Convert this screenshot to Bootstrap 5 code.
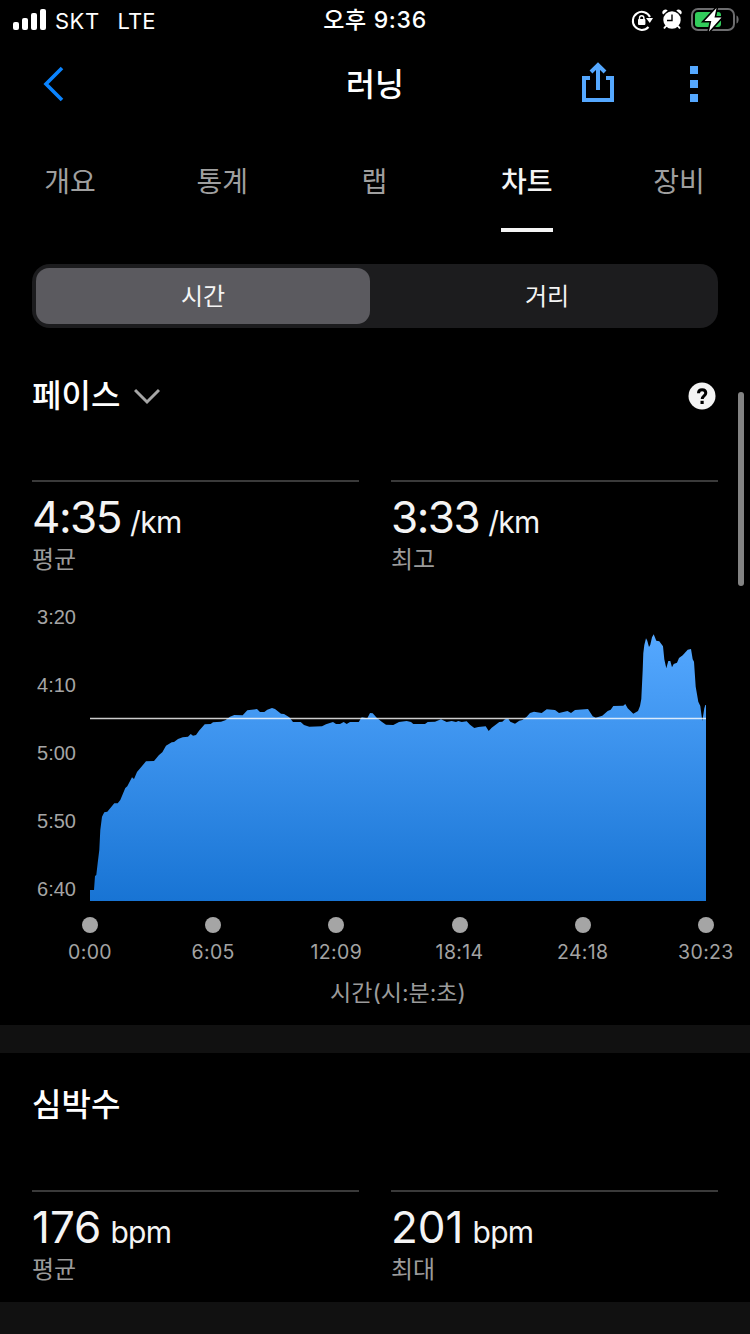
<!DOCTYPE html>
<html lang="ko" data-bs-theme="dark">
<head>
<meta charset="utf-8">
<meta name="viewport" content="width=device-width, initial-scale=1">
<title>러닝</title>
<link href="https://cdn.jsdelivr.net/npm/bootstrap@5.3.0/dist/css/bootstrap.min.css" rel="stylesheet">
<style>
body{background:#000;color:#f4f4f4;font-family:Inter,"Noto Sans CJK KR",sans-serif;line-height:1;height:1334px;overflow:hidden}
svg{display:block;flex:none}
.three{display:grid;grid-template-columns:1fr auto 1fr;align-items:center}
.status{height:40px;padding:0 10px 0 13px;font-size:22px;color:#fff}
.carrier{letter-spacing:.5px}
.carrier,.net{padding-top:1px}
.net{margin-left:18px}
.status .clock{font-size:23px;font-weight:500;letter-spacing:.7px;padding-top:1px;margin-left:-3px}
.titlebar{height:88px;padding:0 40px}
.titlebar h1{font-size:31.5px;font-weight:500;margin:0;padding-top:2px}
.tabs{height:104px;padding:0 27px 0 26px;font-size:28px}
.tabs .nav-item{width:88px;display:flex;justify-content:center}
.tabs .nav-link{padding:2px 0 0;color:#9f9f9f;height:104px;line-height:104px;border-bottom:4px solid transparent}
.tabs .nav-link.active{color:#f4f4f4;font-weight:500;border-color:#f4f4f4}
.segment{margin:32px 32px 0;height:64px;padding:4px;border-radius:18px;background:#1c1c1e}
.segment .btn{flex:1 1 0;border:0;border-radius:13px;font-size:24px;line-height:1;color:#f4f4f4;padding:8px 0 6px 10px}
.segment .btn.on{background:#5b5a5f;flex:0 0 334px;padding-left:0}
.head{height:136px;padding:0 34px 0 32px}
.head h2{font-size:32px;font-weight:500;margin:0}
.pace-head{height:152px;padding-bottom:16px}
.heart-head{height:137px;padding-bottom:31px}
.chevron{margin-left:14px}
.stats{padding:0 32px;gap:32px;height:110px}
.heart .stats{height:112px}
.stat{flex:1 1 0;border-top:2px solid #3a3a3a}
.value{font-size:44px;line-height:70px;height:63px;white-space:nowrap}
.value small{font-size:30px;margin-left:9px;letter-spacing:-.7px}
.time{letter-spacing:-1.5px}
.caption{font-size:24px;line-height:30px;color:#9b9b9b}
.plot{height:315px}
.ylabels{width:90px;padding:17px 14px 0 0;font:20px/20px "Liberation Sans",sans-serif;color:#a5a5a5;text-align:right}
.ylabels div{height:68px}
.xlabels{padding:12px 2px 0 48px;font-size:19.5px;letter-spacing:.35px;color:#a3a3a3}
.xlabels>div{width:84px}
.dot{width:16px;height:16px;border-radius:50%;background:#a5a5a5;margin-bottom:10px}
.axis{font-size:23px;line-height:28px;color:#9b9b9b;padding:16px 0 18px 46px}
.band{height:28px;background:#111}
.band.last{height:32px}
.scroll{position:absolute;left:738px;top:392px;width:6px;height:194px;border-radius:3px;background:#838383}
</style>
</head>
<body class="position-relative">
<header class="status three">
  <div class="d-flex align-items-center">
    <svg width="34" height="22" viewBox="0 0 34 22" fill="#fff"><rect y="13" width="6" height="8" rx="2"/><rect x="9" y="9" width="6" height="12" rx="2"/><rect x="18" y="4" width="6" height="17" rx="2"/><rect x="27" width="6" height="21" rx="2"/></svg>
    <span class="carrier ms-2">SKT</span><span class="net">LTE</span>
  </div>
  <div class="clock">오후 9:36</div>
  <div class="d-flex justify-content-end">
    <svg width="110" height="40" viewBox="630 0 110 40">
      <path d="M648.500 27A9 9 0 1 1 650 17" fill="none" stroke="#fff" stroke-width="2"/><path d="M646 18h7l-3.200 5z" fill="#fff"/>
      <rect x="638" y="19" width="7.400" height="6" rx="1" fill="#fff"/><path d="M639.500 20v-2a2.200 2.200 0 0 1 4.400 0v2" fill="none" stroke="#fff" stroke-width="1.400"/>
      <circle cx="672" cy="20" r="8.700" fill="#fff"/><path d="M663.200 14.600a3 3 0 0 1 4.500-4z M680.800 14.600a3 3 0 0 0-4.500-4z" fill="#fff"/><path d="M666 26l-2 2.500M678 26l2 2.500" stroke="#fff" stroke-width="2"/><path d="M672 14.500v6h-5" fill="none" stroke="#000" stroke-width="1.400"/>
      <rect x="692" y="9" width="42" height="21" rx="6" fill="none" stroke="#6d6d6f" stroke-width="2"/><path d="M736.500 15.500c2.800 1 2.800 7 0 8z" fill="#6d6d6f"/>
      <rect x="695" y="12" width="26" height="15" rx="3" fill="#32cc5b"/>
      <path d="M716.500 8L704.500 21h6.800l-2.300 10.500L721.500 17.500h-7z" fill="#fff" stroke="#000" stroke-width="3.200" paint-order="stroke"/>
    </svg>
  </div>
</header>

<nav class="titlebar three">
  <svg width="26" height="40" viewBox="40 64 26 40"><path d="M62 68L46 84L62 100" fill="none" stroke="#0b84ff" stroke-width="3.600"/></svg>
  <h1>러닝</h1>
  <div class="d-flex justify-content-end">
    <svg width="130" height="44" viewBox="580 62 130 44"><path d="M590 78h-6v22h28v-22h-6M598 90V66M591 72l7-7 7 7" fill="none" stroke="#55a8ff" stroke-width="4"/><path d="M690 66h8v8h-8zM690 80h8v8h-8zM690 94h8v8h-8z" fill="#55a8ff"/></svg>
  </div>
</nav>

<ul class="nav tabs justify-content-between flex-nowrap">
  <li class="nav-item"><a class="nav-link">개요</a></li>
  <li class="nav-item"><a class="nav-link">통계</a></li>
  <li class="nav-item"><a class="nav-link">랩</a></li>
  <li class="nav-item"><a class="nav-link active">차트</a></li>
  <li class="nav-item"><a class="nav-link">장비</a></li>
</ul>

<div class="segment d-flex">
  <button class="btn on">시간</button>
  <button class="btn">거리</button>
</div>

<section>
  <div class="head pace-head d-flex align-items-center">
    <h2>페이스</h2>
    <svg class="chevron" width="26" height="18" viewBox="0 0 26 18"><path d="M1 3L13 15L25 3" fill="none" stroke="#a6a6a6" stroke-width="3"/></svg>
    <svg class="ms-auto" width="28" height="28" viewBox="0 0 28 28"><circle cx="14" cy="14" r="13.500" fill="#f4f4f4"/><path d="M10.500 11.300c0-2.300 1.400-3.500 3.600-3.500s3.700 1.200 3.700 3.200c0 2.800-3.600 2.900-3.600 6" fill="none" stroke="#000" stroke-width="3"/><path d="M12.500 18.800h3.200v3.200h-3.200z"/></svg>
  </div>
  <div class="stats d-flex">
    <div class="stat"><div class="value"><span class="time">4:35</span><small>/km</small></div><div class="caption">평균</div></div>
    <div class="stat"><div class="value"><span class="time">3:33</span><small>/km</small></div><div class="caption">최고</div></div>
  </div>
  <div class="d-flex plot">
    <div class="ylabels"><div>3:20</div><div>4:10</div><div>5:00</div><div>5:50</div><div>6:40</div></div>
    <svg width="616" height="311" viewBox="90 590 616 311">
      <defs><linearGradient id="pace" x1="0" y1="0" x2="0" y2="1"><stop stop-color="#55a8ff"/><stop offset="1" stop-color="#1874d4"/></linearGradient></defs>
      <path fill="url(#pace)" d="M90 901V890H94L95 876L96.300 875L97.700 863L99.300 850L100.300 830L102 816.700L104.300 812.300L107.300 811.700L114.300 803.300H117.700L120.300 800L125.300 788L127.300 786.300L132 777.300L134 779L137 772L146 761.300L154 761L159 755L162.300 752.300L166 745.700L171.700 742.300L174 742L178 739L182.700 737.300L188 736.700L190.700 734L193 735.700L196 735L199 730.700L204.700 724.300L210.700 724L213 722.300L221 721.700L225.300 720.300L230 716.700L234.300 715L242.700 715.300L247.300 710.300L257 709L260 712H264.300L267.300 709.700L272 708L275 709L281 713.700L284 714L289.300 717.300L293 722H300.700L304 725L309.300 726.700L322 726.300L326 724.300L333 722L336 724H340L343.700 722L346.700 724L350 722H358.700L361.700 717.300L367.300 718.300L370 713L372.700 713.300L376.700 717.700L381.700 721.700L386 724.700L393.300 725L399 722L406.700 721L411 722L413.300 724H425L427.700 722L435 721.700L441 719.300L446.700 722L451.700 721L456 722L458.300 721L461.700 722L466.700 721.300L470 724.700L474.300 728L478.300 727L485.700 726.300L488.700 731L491.700 727.700L499.300 722L502.300 721.700L505 719.300L508.300 718.700L510.300 721.700L515 723.700L519.300 720.700L522.300 720L526.700 716.700L530 713L534 711.700L541.700 713L546.700 709.300L555 710L559 713L567.500 711L571 713L575 710L588 709L592.700 716.300L595.700 717.700L602.300 715.700L607.700 711L610.700 709.700L613.300 706L623.300 705.700L625.300 704L627.700 708.300L633.300 713.700L638 711L640 706L641.300 699L642.700 670L643.300 653.300L644.300 645L646 638.300L647.300 640.700L649 647L650.300 644.700L652 637.300L653.700 634.300L656.300 640.700L659.300 641.300L663 646.300L664.300 659.300L666.300 668.300L668.300 661H670.300L672 667.300L673.700 664L677 662.700L679 658L682.700 655.300L687.700 649.700L691 649L692.700 659.300L694 661.700L695.700 686.700L698.300 701.700L700.300 706L702.300 721L704.300 708.300L705.300 705H706V901Z"/>
      <path d="M90 718.500H706" stroke="#fff" stroke-opacity=".8" stroke-width="1.300"/>
    </svg>
  </div>
  <div class="xlabels d-flex justify-content-between">
    <div class="d-flex flex-column align-items-center"><i class="dot"></i>0:00</div>
    <div class="d-flex flex-column align-items-center"><i class="dot"></i>6:05</div>
    <div class="d-flex flex-column align-items-center"><i class="dot"></i>12:09</div>
    <div class="d-flex flex-column align-items-center"><i class="dot"></i>18:14</div>
    <div class="d-flex flex-column align-items-center"><i class="dot"></i>24:18</div>
    <div class="d-flex flex-column align-items-center"><i class="dot"></i>30:23</div>
  </div>
  <div class="axis text-center">시간(시:분:초)</div>
</section>
<div class="band"></div>
<section class="heart">
  <div class="head heart-head d-flex align-items-center"><h2>심박수</h2></div>
  <div class="stats d-flex">
    <div class="stat"><div class="value">176<small>bpm</small></div><div class="caption">평균</div></div>
    <div class="stat"><div class="value">201<small>bpm</small></div><div class="caption">최대</div></div>
  </div>
</section>
<div class="band last"></div>
<div class="scroll"></div>
<script src="https://cdn.jsdelivr.net/npm/bootstrap@5.3.0/dist/js/bootstrap.bundle.min.js"></script>
</body>
</html>
